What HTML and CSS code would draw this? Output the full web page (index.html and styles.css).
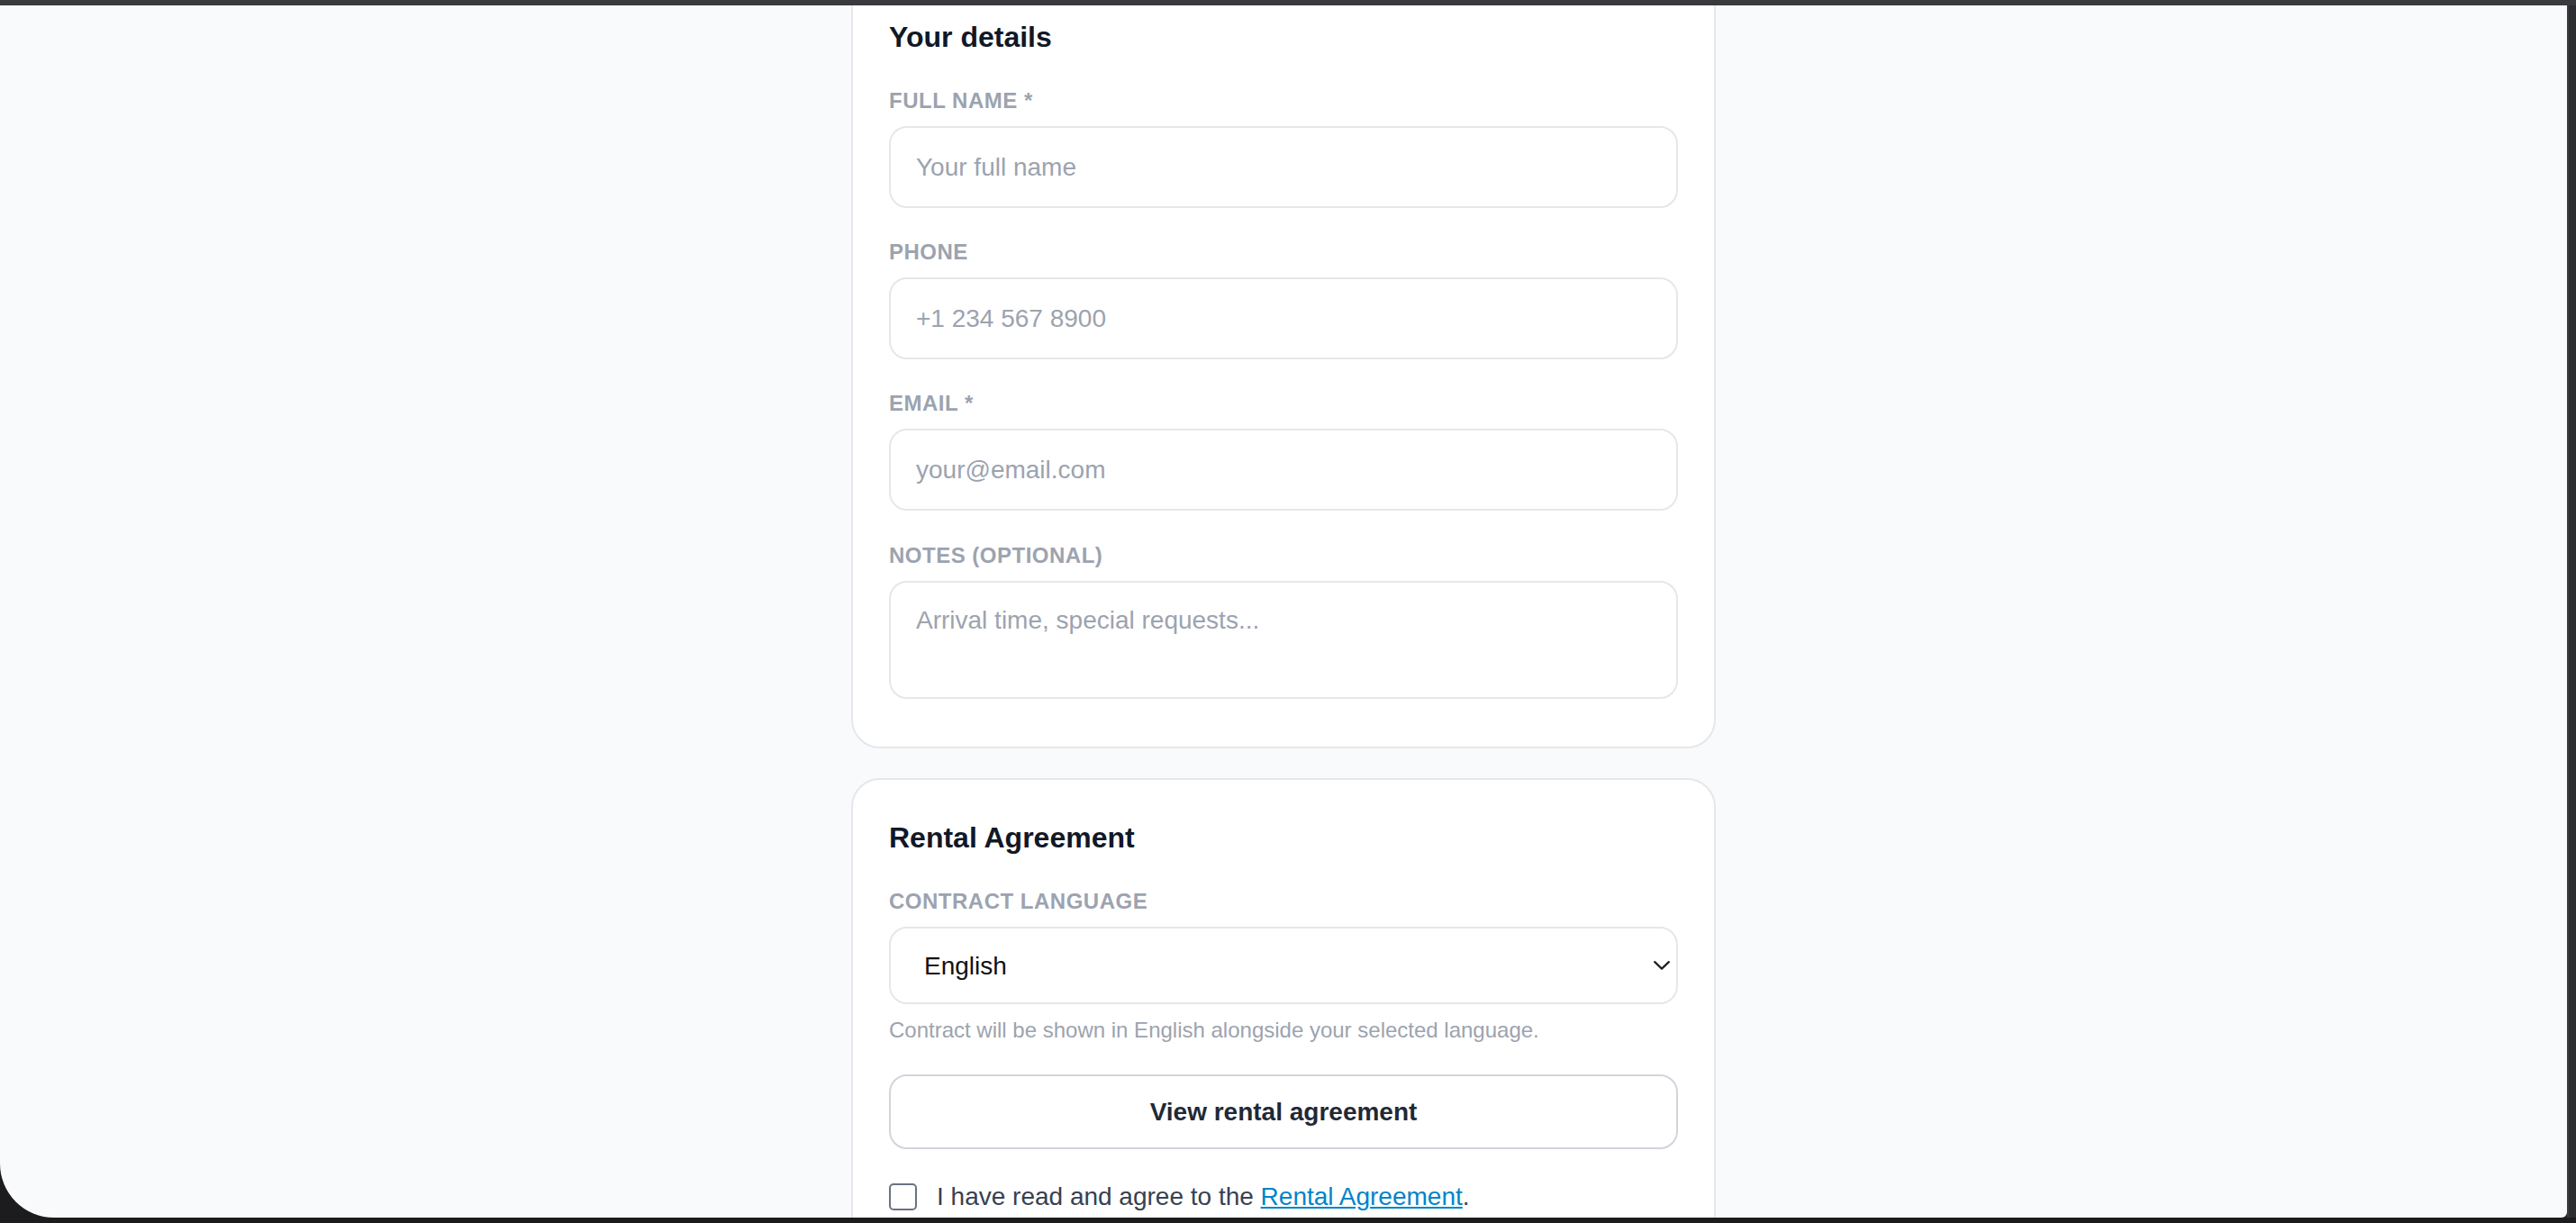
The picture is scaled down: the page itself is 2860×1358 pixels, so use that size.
FILE: index.html
```html
<!DOCTYPE html>
<html lang="en">
<head>
  <meta charset="UTF-8">
  <meta name="viewport" content="width=device-width, initial-scale=1.0">
  <title>Booking details</title>
  <link rel="stylesheet" href="styles.css">
</head>
<body>
  <div class="frame__top"></div>
  <div class="frame__row">
    <div class="window">
      <main class="booking">

        <!-- Guest details -->
        <section class="booking__card booking__card--first">
          <h2 class="booking__title">Your details</h2>
          <div class="booking__field">
            <label class="booking__label" for="name">Full name *</label>
            <input class="booking__input" id="name" type="text" placeholder="Your full name">
          </div>
          <div class="booking__field">
            <label class="booking__label" for="phone">Phone</label>
            <input class="booking__input" id="phone" type="tel" placeholder="+1 234 567 8900">
          </div>
          <div class="booking__field">
            <label class="booking__label" for="email">Email *</label>
            <input class="booking__input" id="email" type="email" placeholder="your@email.com">
          </div>
          <div class="booking__field">
            <label class="booking__label" for="notes">Notes (optional)</label>
            <textarea class="booking__input booking__input--area" id="notes" placeholder="Arrival time, special requests..."></textarea>
          </div>
        </section>

        <!-- Rental agreement -->
        <section class="booking__card">
          <h2 class="booking__title">Rental Agreement</h2>
          <div class="booking__field booking__field--tight">
            <label class="booking__label" for="lang">Contract language</label>
            <div class="booking__select-wrap">
              <select class="booking__select" id="lang">
                <option>English</option>
                <option>Deutsch</option>
                <option>Français</option>
                <option>Español</option>
              </select>
              <svg class="booking__chevron" width="18" height="10" viewBox="0 0 18 10" aria-hidden="true">
                <polyline points="1.2,1.2 9,8.6 16.8,1.2" fill="none" stroke="#222" stroke-width="2.3" stroke-linecap="round" stroke-linejoin="round"/>
              </svg>
            </div>
            <p class="booking__hint">Contract will be shown in English alongside your selected language.</p>
          </div>
          <button class="booking__button" type="button">View rental agreement</button>
          <label class="booking__agree">
            <input class="booking__check" type="checkbox">
            <span>I have read and agree to the <a class="booking__link" href="#">Rental Agreement</a>.</span>
          </label>
        </section>

      </main>
    </div>
    <div class="frame__side"></div>
  </div>
</body>
</html>
```

FILE: styles.css
```css
:root {
  --page-bg: #f9fafb;
  --card-border: #e5e7eb;
  --muted: #9ca3af;
  --heading: #111827;
  --text: #374151;
  --link: #0284c7;
}
* { box-sizing: border-box; margin: 0; padding: 0; }
body {
  font-family: "Liberation Sans", Arial, sans-serif;
  background: #1c1c1e;
  height: 1358px;
  overflow: hidden;
}

/* dark frame around the captured window */
.frame__top { height: 6px; background: #3a3a3e; }
.frame__row { display: flex; height: 1346px; }
.frame__side {
  width: 10px;
  background: #2e2e30;
  border-left: 2px solid #3c3c3e;
}
.window {
  flex: 1;
  background: var(--page-bg);
  border-bottom-left-radius: 60px;
  border-bottom-right-radius: 6px;
  overflow: hidden;
}

.booking {
  width: 960px;
  margin: 0 auto;
  display: flex;
  flex-direction: column;
  gap: 33px;
}
.booking__card {
  background: #fff;
  border: 2px solid var(--card-border);
  border-radius: 32px;
  padding: 40px 40px 53px;
}
.booking__card--first { margin-top: -31px; }
.booking__title {
  font-size: 32px;
  line-height: 44px;
  font-weight: 700;
  color: var(--heading);
  padding-top: 2px;
  margin-bottom: 31px;
}
.booking__field { margin-bottom: 32px; }
.booking__field:last-child { margin-bottom: 0; }
.booking__field--tight { margin-bottom: 31px; }
.booking__label {
  display: block;
  font-size: 24px;
  line-height: 36px;
  font-weight: 700;
  letter-spacing: 0.5px;
  text-transform: uppercase;
  color: var(--muted);
  margin-bottom: 10px;
}
.booking__input {
  display: block;
  width: 100%;
  height: 91px;
  padding: 0 28px;
  border: 2px solid var(--card-border);
  border-radius: 20px;
  background: #fff;
  font-family: inherit;
  font-size: 28px;
  color: var(--heading);
  outline: none;
}
.booking__input::placeholder { color: var(--muted); }
.booking__input--area {
  height: 131px;
  padding: 21px 28px;
  line-height: 42px;
  resize: none;
}
.booking__field:nth-child(3), .booking__field:nth-child(4) { margin-top: -1px; }
.booking__select-wrap { position: relative; }
.booking__select {
  display: block;
  width: 100%;
  height: 86px;
  padding: 0 60px 0 37px;
  border: 2px solid var(--card-border);
  border-radius: 20px;
  background: #fff;
  font-family: inherit;
  font-size: 28px;
  color: #111;
  appearance: none;
  -webkit-appearance: none;
  outline: none;
}
.booking__chevron {
  position: absolute;
  right: 9px;
  top: 38px;
  pointer-events: none;
}
.booking__hint {
  font-size: 24px;
  line-height: 36px;
  color: var(--muted);
  margin-top: 11px;
}
.booking__button {
  display: block;
  width: 100%;
  height: 83px;
  border: 2px solid #d1d5db;
  border-radius: 20px;
  background: #fff;
  font-family: inherit;
  font-size: 28px;
  font-weight: 700;
  color: #1f2937;
  cursor: pointer;
}
.booking__agree {
  display: flex;
  align-items: center;
  gap: 22px;
  margin-top: 32px;
  font-size: 28px;
  line-height: 42px;
  color: var(--text);
}
.booking__check {
  appearance: none;
  -webkit-appearance: none;
  flex: none;
  width: 31px;
  height: 30px;
  border: 2px solid #6b7280;
  border-radius: 5px;
  background: #fff;
}
.booking__link { color: var(--link); text-decoration: underline; }
```
